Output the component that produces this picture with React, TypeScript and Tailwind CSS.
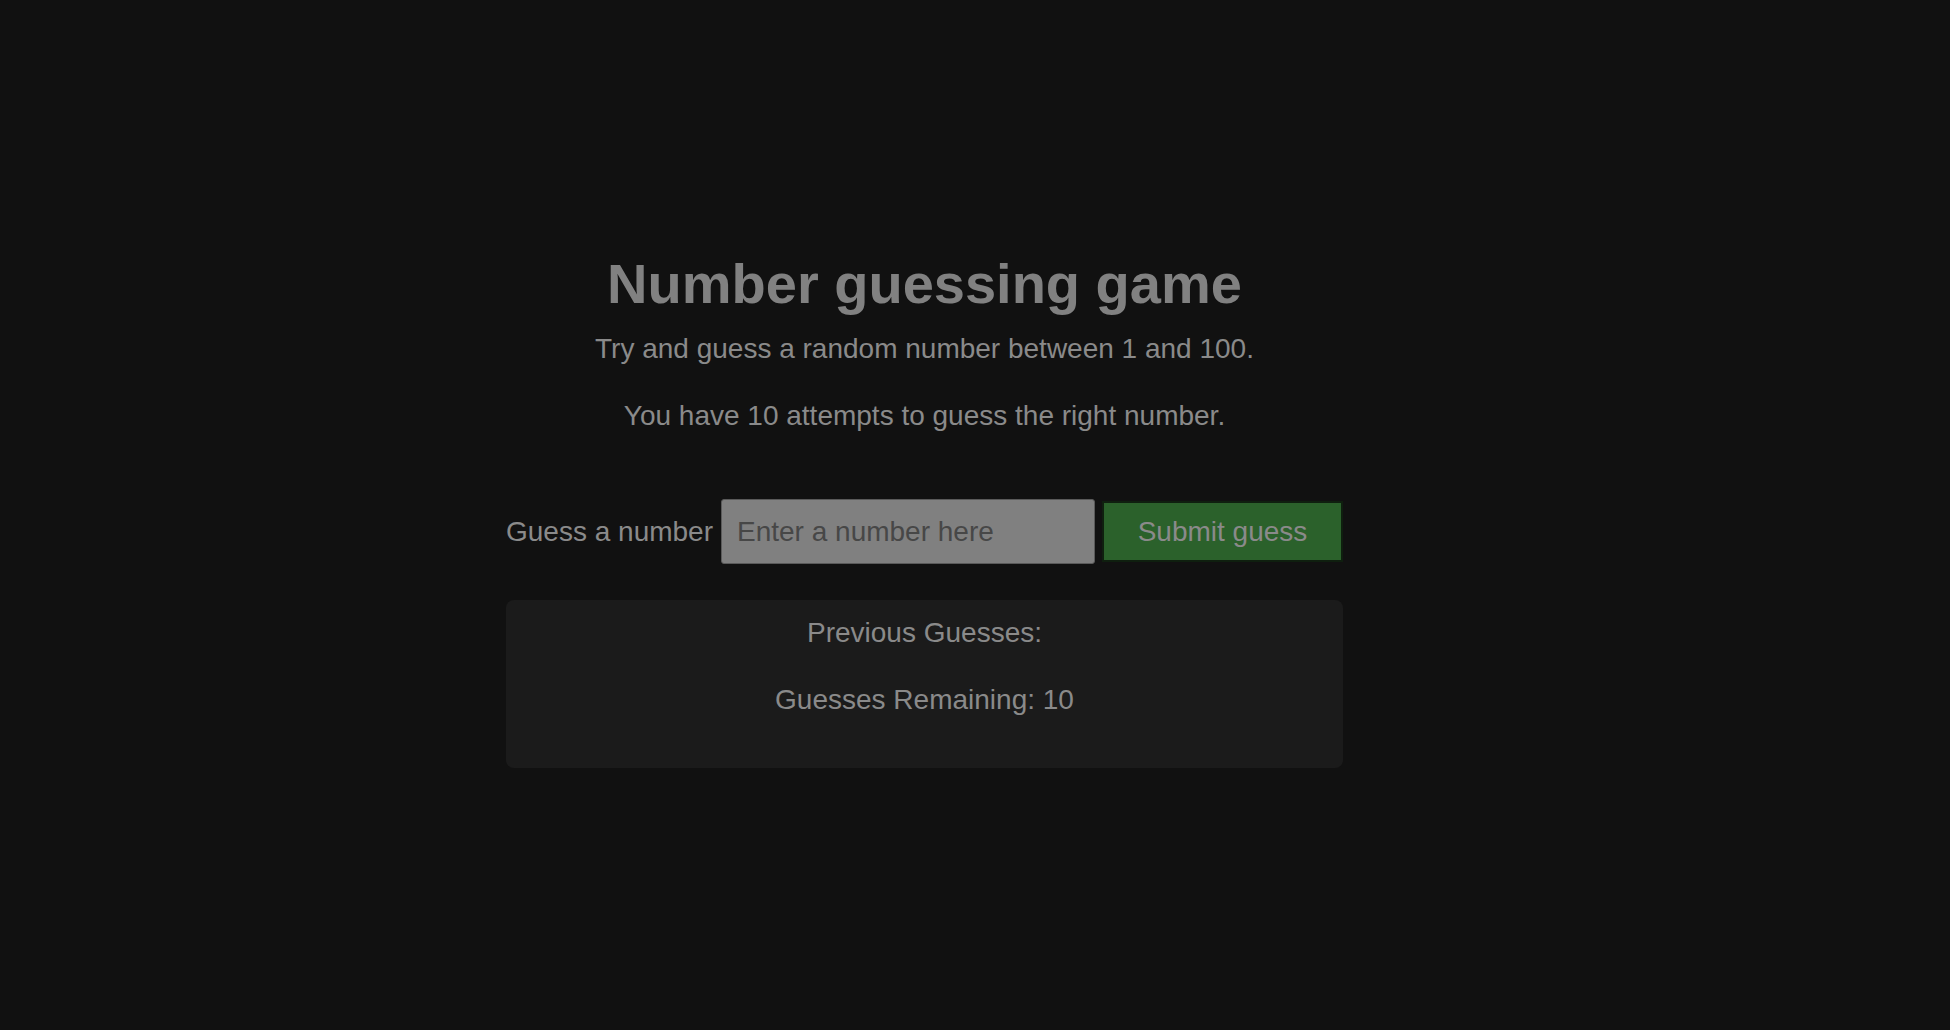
export default function App() {
  return (
    <div
      className="min-h-[1030px] w-full bg-[#111111] text-[#8a8a8a]"
      style={{ fontFamily: '"Liberation Sans", Arial, sans-serif' }}
    >
      <div className="ml-[506px] w-[837px] pt-[252px]">
        <h1 className="text-center text-[56px] font-bold leading-[64px] text-[#818181]">
          Number guessing game
        </h1>
        <p className="mt-[17px] text-center text-[28px] leading-[32px]">
          Try and guess a random number between 1 and 100.
        </p>
        <p className="mt-[35px] text-center text-[28px] leading-[32px]">
          You have 10 attempts to guess the right number.
        </p>

        {/* guess form */}
        <div className="mt-[67px] flex items-center">
          <label className="text-[28px] leading-[32px]" htmlFor="guessField">
            Guess a number
          </label>
          <input
            id="guessField"
            type="number"
            placeholder="Enter a number here"
            className="ml-[8px] h-[65px] w-[374px] rounded-[3px] border border-[#5a5a5a] bg-[#808080] pl-[15px] text-[28px] text-[#333] outline-none placeholder:text-[#474747]"
          />
          <button className="ml-[7px] h-[61px] w-[241px] border-2 border-[#0f1f0f] bg-[#2b612b] text-[28px] leading-[32px] text-[#8a8a8a]">
            Submit guess
          </button>
        </div>

        {/* results */}
        <div className="mt-[36px] h-[168px] rounded-lg bg-[#1b1b1b] pt-[17px] text-center text-[28px] leading-[32px]">
          <p>Previous Guesses:</p>
          <p className="mt-[35px]">Guesses Remaining: 10</p>
        </div>
      </div>
    </div>
  );
}
